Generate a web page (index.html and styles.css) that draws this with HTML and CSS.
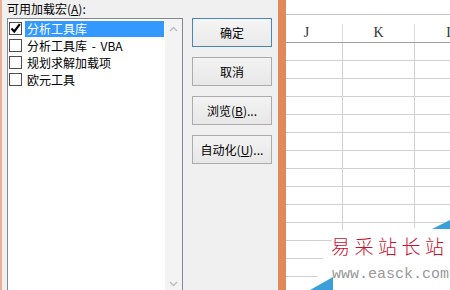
FILE: index.html
```html
<!doctype html>
<html lang="zh-CN">
<head>
    <meta charset="UTF-8" />
    <title>加载宏</title>
    <link rel="stylesheet" href="styles.css">
</head>
<body>
<div class="screen">

    <div class="dialog">
        <div class="caption">可用加载宏(<u>A</u>):</div>
        <div class="dialog-body">
            <div class="listbox">
                <ul class="items">
                    <li class="item selected">
                        <span class="check">
                            <svg width="11" height="11" viewBox="0 0 11 11"><path d="M1.5 5.5 L4.3 8.5 L9.8 1.2" fill="none" stroke="#000" stroke-width="2.2"/></svg>
                        </span>
                        <span class="text">分析工具库</span>
                    </li>
                    <li class="item"><span class="check"></span><span class="text">分析工具库 - VBA</span></li>
                    <li class="item"><span class="check"></span><span class="text">规划求解加载项</span></li>
                    <li class="item"><span class="check"></span><span class="text">欧元工具</span></li>
                </ul>
                <div class="scrollbar">
                    <span class="arrow"><svg width="9" height="6" viewBox="0 0 9 6"><polyline points="1,5 4.5,1.5 8,5" fill="none" stroke="#bcbcbc" stroke-width="1.4"/></svg></span>
                    <span class="arrow"><svg width="9" height="6" viewBox="0 0 9 6"><polyline points="1,1 4.5,4.5 8,1" fill="none" stroke="#bcbcbc" stroke-width="1.4"/></svg></span>
                </div>
            </div>
            <div class="buttons">
                <button class="btn default">确定</button>
                <button class="btn">取消</button>
                <button class="btn">浏览(<u>B</u>)...</button>
                <button class="btn">自动化(<u>U</u>)...</button>
            </div>
        </div>
    </div>

    <div class="frame-edge"></div>

    <div class="sheet">
        <div class="col-header">
            <div class="col">J</div>
            <div class="col">K</div>
            <div class="col">L</div>
        </div>
        <div class="grid"></div>
    </div>

    <!-- site watermark over the bottom right corner -->
    <div class="watermark">
        <svg class="wm-bg" width="140" height="72" viewBox="0 0 140 72">
            <polygon points="3,72 18,26 34,11 140,9 140,72" fill="#fff"/>
            <polygon points="122,11 140,2 140,11" fill="#3d9fd9"/>
            <polygon points="0,72 23,59 23,72" fill="#3d9fd9"/>
        </svg>
        <div class="wm-cn">易采站长站</div>
        <div class="wm-url">www.easck.com</div>
    </div>

</div>
</body>
</html>
```

FILE: styles.css
```css
body {
    margin: 0;
    font-family: "Noto Sans CJK SC", sans-serif;
    font-size: 12px;
    color: #000;
}
.screen {
    display: flex;
    width: 450px;
    height: 290px;
    overflow: hidden;
    position: relative;
}

/* dialog */
.dialog {
    width: 278px;
    flex: none;
    box-sizing: border-box;
    background: #f0f0f0;
    border-left: 2px solid #eab092;
    padding-left: 5px;
}
.caption {
    line-height: 18px;
}
.dialog-body {
    display: flex;
    align-items: flex-start;
}
.listbox {
    width: 176px;
    height: 277px;
    box-sizing: border-box;
    border: 1px solid #828790;
    background: #fff;
    display: flex;
}
.items {
    list-style: none;
    margin: 0;
    padding: 1px 0 0;
    flex: 1;
}
.item {
    display: flex;
    align-items: center;
    height: 17px;
    padding-left: 1px;
}
.check {
    width: 13px;
    height: 13px;
    box-sizing: border-box;
    border: 1px solid #4d4d4d;
    background: #fff;
    flex: none;
    margin-right: 3px;
}
.check svg {
    display: block;
}
.text {
    flex: 1;
    height: 16px;
    line-height: 16px;
    padding-left: 2px;
    margin-right: 1px;
    white-space: nowrap;
    word-spacing: 2px;
}
.selected .text {
    background: #3399ff;
    color: #fff;
}
.scrollbar {
    width: 17px;
    background: #f3f3f3;
    display: flex;
    flex-direction: column;
    justify-content: space-between;
}
.arrow {
    height: 20px;
    display: flex;
    align-items: center;
    justify-content: center;
}
.buttons {
    display: flex;
    flex-direction: column;
    gap: 10px;
    width: 80px;
    margin-left: 9px;
}
.btn {
    height: 29px;
    padding: 0;
    border: 1px solid #acacac;
    background: linear-gradient(#f3f3f3, #e7e7e7);
    font-family: "Noto Sans CJK SC", sans-serif;
    font-size: 12px;
    color: #000;
}
.btn.default {
    border-color: #4c86b5;
    background: linear-gradient(#f5f5f5, #eaeaea);
}

/* window border */
.frame-edge {
    width: 8px;
    flex: none;
    background: #e08a5c;
}

/* worksheet */
.sheet {
    flex: 1;
    background: #fff;
    overflow: hidden;
}
.col-header {
    display: flex;
    margin: 14px 0 0 -15px;
    padding-top: 9px;
    border-top: 1px solid #c6c6c6;
    border-bottom: 1px solid #9c9c9c;
}
.col {
    flex: none;
    width: 72px;
    height: 18px;
    box-sizing: border-box;
    border-right: 1px solid #dadada;
    text-align: center;
    line-height: 18px;
    font-family: "Liberation Serif", serif;
    font-size: 14px;
    color: #333;
}
.grid {
    height: 260px;
    margin-left: -15px;
    background-image:
        repeating-linear-gradient(to bottom, transparent 0 17px, #d0d0d0 17px 18px),
        repeating-linear-gradient(to right, transparent 0 71px, #d0d0d0 71px 72px);
}

/* watermark */
.watermark {
    position: absolute;
    left: 310px;
    top: 218px;
    width: 140px;
    height: 72px;
}
.wm-bg {
    position: absolute;
    left: 0;
    top: 0;
}
.wm-cn {
    position: absolute;
    left: 21px;
    top: 17px;
    font-size: 19px;
    font-weight: 300;
    line-height: 22px;
    letter-spacing: 4.5px;
    color: #c8102e;
    white-space: nowrap;
}
.wm-url {
    position: absolute;
    left: 22px;
    top: 49px;
    font-family: "Liberation Mono", monospace;
    font-size: 15px;
    line-height: 15px;
    color: #999;
    white-space: nowrap;
}
```
